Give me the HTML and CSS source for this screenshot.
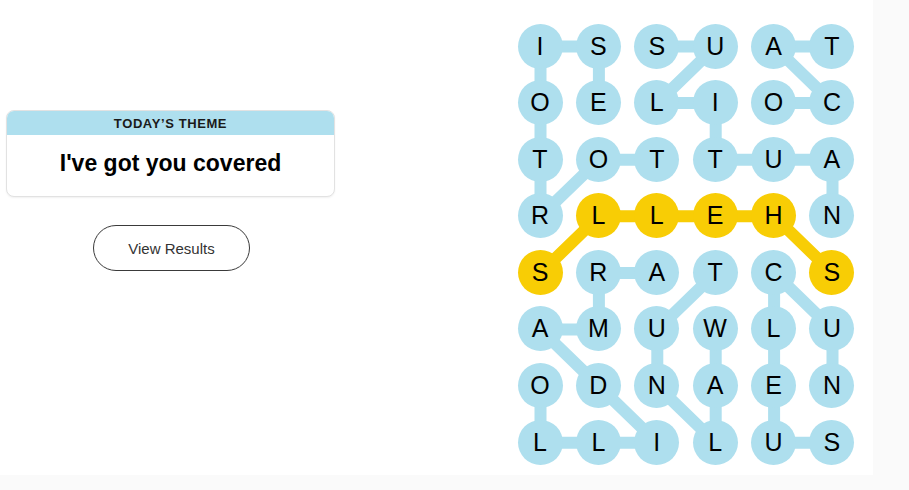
FILE: index.html
```html
<!DOCTYPE html>
<html lang="en">
<head>
<meta charset="utf-8">
<title>Strands</title>
<link rel="stylesheet" href="styles.css">
</head>
<body>
<main class="page">
  <section class="side">
    <div class="theme-card">
      <div class="theme-head">TODAY’S THEME</div>
      <div class="theme-body">I've got you covered</div>
    </div>
    <button class="results-btn">View Results</button>
  </section>
  <section class="board">
    <svg class="links" width="337" height="442" viewBox="0 0 337 442">
      <g class="link-blue">
        <polyline points="139.3,135.7 80.9,135.7 22.5,192.3 22.5,135.7 22.5,79.1 22.5,22.5 80.9,22.5 80.9,79.1"/>
        <polyline points="314.5,192.3 314.5,135.7 256.1,135.7 197.7,135.7 197.7,79.1 139.3,79.1 197.7,22.5 139.3,22.5"/>
        <polyline points="314.5,22.5 256.1,22.5 314.5,79.1 256.1,79.1"/>
        <polyline points="139.3,248.9 80.9,248.9 80.9,305.5 22.5,305.5 80.9,362.1 139.3,418.7 80.9,418.7 22.5,418.7 22.5,362.1"/>
        <polyline points="197.7,305.5 197.7,362.1 197.7,418.7 139.3,362.1 139.3,305.5 197.7,248.9"/>
        <polyline points="314.5,362.1 314.5,305.5 256.1,248.9 256.1,305.5 256.1,362.1 256.1,418.7 314.5,418.7"/>
      </g>
      <g class="link-gold">
        <polyline points="314.5,248.9 256.1,192.3 197.7,192.3 139.3,192.3 80.9,192.3 22.5,248.9"/>
      </g>
    </svg>
    <div class="grid">
      <div class="cell">I</div><div class="cell">S</div><div class="cell">S</div><div class="cell">U</div><div class="cell">A</div><div class="cell">T</div>
      <div class="cell">O</div><div class="cell">E</div><div class="cell">L</div><div class="cell">I</div><div class="cell">O</div><div class="cell">C</div>
      <div class="cell">T</div><div class="cell">O</div><div class="cell">T</div><div class="cell">T</div><div class="cell">U</div><div class="cell">A</div>
      <div class="cell">R</div><div class="cell gold">L</div><div class="cell gold">L</div><div class="cell gold">E</div><div class="cell gold">H</div><div class="cell">N</div>
      <div class="cell gold">S</div><div class="cell">R</div><div class="cell">A</div><div class="cell">T</div><div class="cell">C</div><div class="cell gold">S</div>
      <div class="cell">A</div><div class="cell">M</div><div class="cell">U</div><div class="cell">W</div><div class="cell">L</div><div class="cell">U</div>
      <div class="cell">O</div><div class="cell">D</div><div class="cell">N</div><div class="cell">A</div><div class="cell">E</div><div class="cell">N</div>
      <div class="cell">L</div><div class="cell">L</div><div class="cell">I</div><div class="cell">L</div><div class="cell">U</div><div class="cell">S</div>
    </div>
  </section>
</main>
</body>
</html>
```
FILE: styles.css
```css
html, body {
  margin: 0;
  padding: 0;
  background: #fafafa;
  font-family: "Liberation Sans", Arial, sans-serif;
  color: #121212;
}

.page {
  width: 873px;
  height: 475px;
  background: #ffffff;
  display: flex;
  align-items: flex-start;
  padding-left: 6px;
  box-sizing: border-box;
}

.side {
  width: 329px;
  padding-top: 110px;
  display: flex;
  flex-direction: column;
  align-items: center;
}

.theme-card {
  width: 329px;
  box-sizing: border-box;
  border: 1px solid #e2e2e2;
  border-radius: 8px;
  overflow: hidden;
  box-shadow: 0 1px 2px rgba(0, 0, 0, 0.06);
  background: #fff;
}

.theme-head {
  height: 24px;
  background: #aedfee;
  font-size: 13px;
  font-weight: 700;
  letter-spacing: 0.6px;
  line-height: 25px;
  text-align: center;
  color: #1a1a1a;
}

.theme-body {
  height: 61px;
  line-height: 56px;
  text-align: center;
  font-size: 23px;
  font-weight: 700;
  color: #000;
}

.results-btn {
  margin-top: 28px;
  margin-left: 2px;
  width: 157px;
  height: 46px;
  border: 1.5px solid #3a3a3a;
  border-radius: 23px;
  background: #fff;
  font-family: "Liberation Sans", Arial, sans-serif;
  font-size: 15px;
  color: #333;
  padding: 0;
}

.board {
  position: relative;
  margin-left: 182.5px;
  margin-top: 23.5px;
  width: 337px;
  height: 442px;
}

.links {
  position: absolute;
  left: 0;
  top: 0;
}

.links polyline {
  fill: none;
  stroke-width: 12;
  stroke-linejoin: round;
  stroke-linecap: round;
}

.link-blue polyline {
  stroke: #aedfee;
}

.link-gold polyline {
  stroke: #f8cd05;
}

.grid {
  position: relative;
  display: grid;
  grid-template-columns: repeat(6, 45px);
  grid-auto-rows: 45px;
  column-gap: 13.4px;
  row-gap: 11.6px;
}

.cell {
  width: 45px;
  height: 45px;
  border-radius: 50%;
  background: #aedfee;
  text-align: center;
  line-height: 45px;
  font-size: 25px;
  color: #000;
}

.cell.gold {
  background: #f8cd05;
}
```
